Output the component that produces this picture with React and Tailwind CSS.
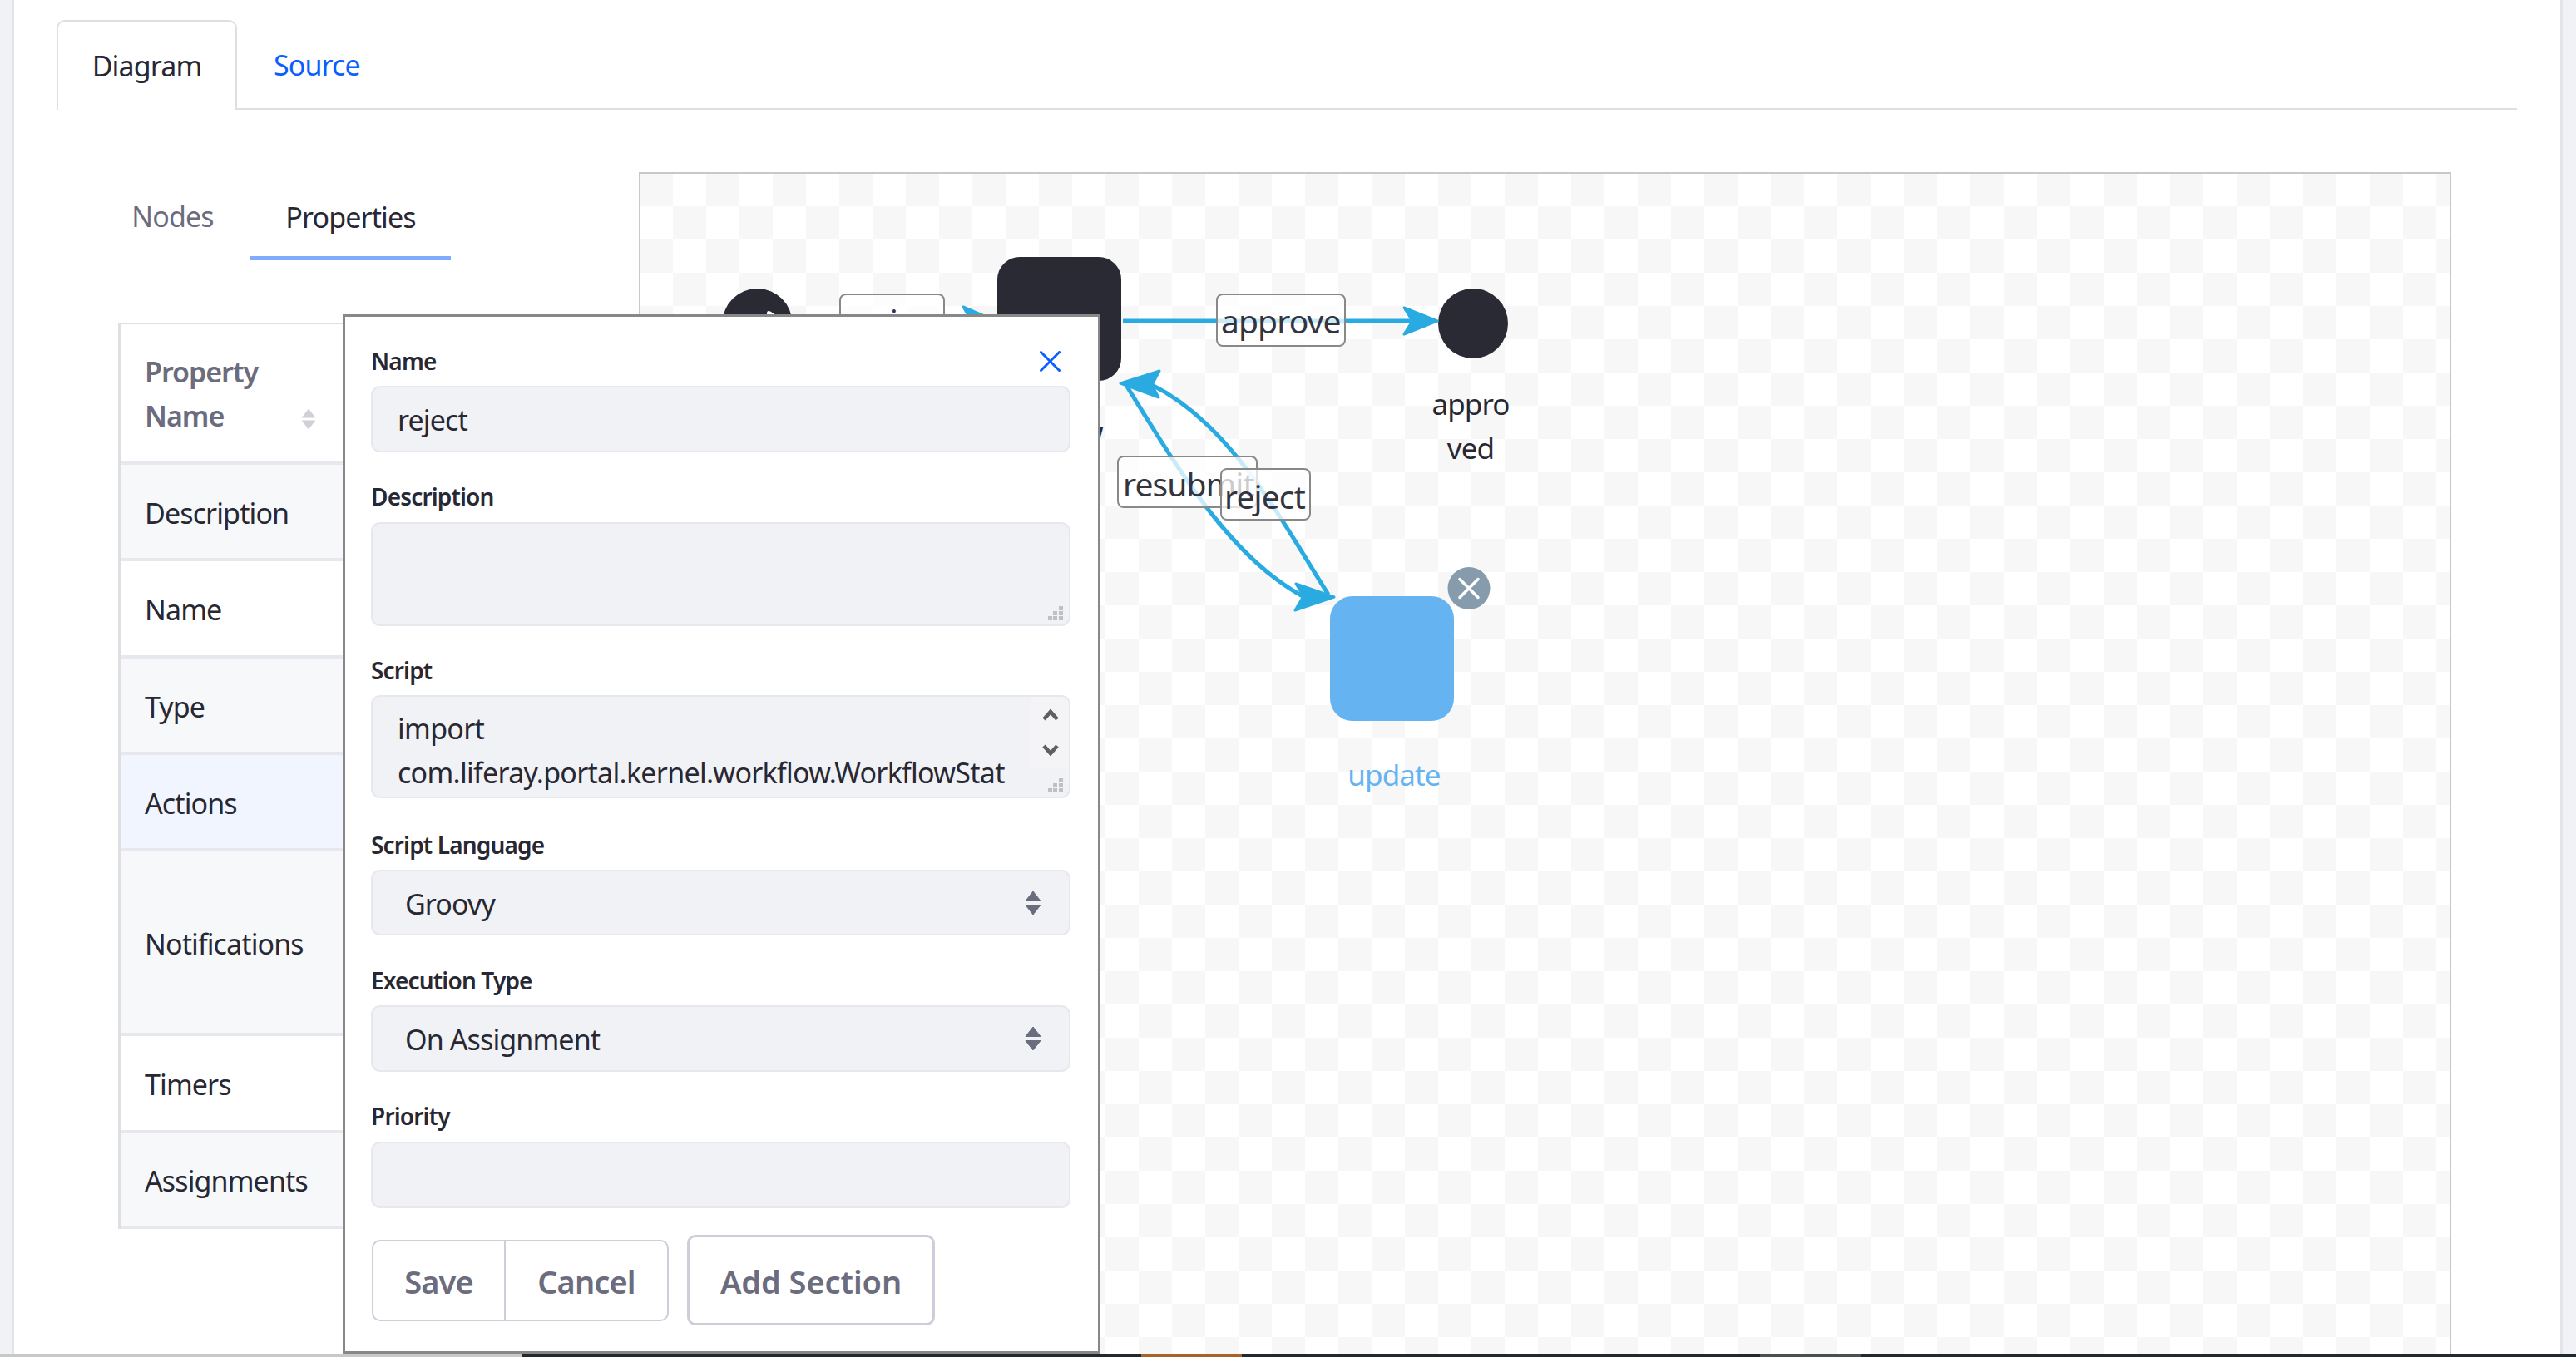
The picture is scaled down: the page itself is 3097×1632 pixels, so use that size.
import React from "react";

const X0 = 770;
const Y0 = 209;

function Grip() {
  return (
    <svg width="19" height="19" viewBox="0 0 19 19" className="absolute right-[7px] bottom-[5px]">
      <g fill="#bfc0c4">
        <rect x="14" y="2" width="5" height="5" />
        <rect x="7" y="8" width="5" height="5" />
        <rect x="14" y="8" width="5" height="5" />
        <rect x="1" y="14" width="5" height="5" />
        <rect x="7" y="14" width="5" height="5" />
        <rect x="14" y="14" width="5" height="5" />
      </g>
    </svg>
  );
}

function SelectArrows() {
  return (
    <svg width="20" height="30" viewBox="0 0 20 30">
      <path d="M10 1 L19 12.5 L1 12.5 Z" fill="#6b6c7e" stroke="#6b6c7e" strokeWidth="1" strokeLinejoin="round" />
      <path d="M1 17.5 L19 17.5 L10 29 Z" fill="#6b6c7e" stroke="#6b6c7e" strokeWidth="1" strokeLinejoin="round" />
    </svg>
  );
}

function SortArrows() {
  return (
    <svg width="18" height="26" viewBox="0 0 18 26">
      <path d="M9 0.5 L17.5 11.5 L0.5 11.5 Z" fill="#d0d1d6" />
      <path d="M0.5 14.5 L17.5 14.5 L9 25.5 Z" fill="#d0d1d6" />
    </svg>
  );
}

function Label({ children }) {
  return (
    <div className="mb-[11px] h-[40px] pt-[1px] text-[28px] leading-[40px] font-semibold tracking-[-0.03em] text-[#272833]">
      {children}
    </div>
  );
}

const boxClass =
  "relative flex items-center rounded-[11px] border-2 border-[#e7e7ed] bg-[#f1f2f5] text-[34px] text-[#272833]";

function Row({ label, className }) {
  return (
    <div className={`flex items-center pl-[29px] pt-[4px] border-b-4 border-[#e7e7ed] ${className}`}>{label}</div>
  );
}

function EdgeLabel({ text, className }) {
  return (
    <div
      className={`absolute flex items-center overflow-hidden rounded-[8px] border-2 border-[#888888] bg-white/75 text-[39px] whitespace-nowrap text-[#333440] ${className}`}
    >
      {text}
    </div>
  );
}

function Head({ d }) {
  return <path d={d} fill="#29abe2" stroke="#29abe2" strokeWidth="3" strokeLinejoin="round" />;
}

function Diagram() {
  return (
    <svg
      width="2177"
      height="1419"
      viewBox={`${X0} ${Y0} 2177 1419`}
      className="absolute left-0 top-0"
    >
      <circle cx="910.5" cy="389" r="42" fill="#2a2a35" />
      <path d="M922 389 L922 377 Q922 372 927 375 L940 384 Z" fill="#ffffff" />
      <rect x="1199" y="309" width="149" height="149" rx="27" fill="#2a2a35" />
      <circle cx="1771" cy="389" r="42" fill="#2a2a35" />
      <rect x="1599" y="717" width="149" height="150" rx="27" fill="#65b3f0" />
      <circle cx="1766" cy="707.5" r="25.5" fill="#869cad" />
      <path d="M1755 696.5 L1777 718.5 M1777 696.5 L1755 718.5" stroke="#ffffff" strokeWidth="3.5" strokeLinecap="round" />

      <path d="M1350 386 L1700 386" stroke="#29abe2" strokeWidth="5" fill="none" />
      <Head d="M1728 386 L1688 370 L1698 386 L1688 402 Z" />
      <Head d="M1197 386 L1158 369 L1168 386 L1158 403 Z" />

      <path d="M1355 465 C1420 570 1480 670 1566 717" stroke="#29abe2" strokeWidth="5" fill="none" />
      <path d="M1597 715 C1540 625 1480 510 1385 463" stroke="#29abe2" strokeWidth="5" fill="none" />
      <Head d="M1347 461 L1394 446 L1385 463 L1393 478 Z" />
      <Head d="M1604 718 L1558 702 L1567 717 L1557 734 Z" />
    </svg>
  );
}

export default function App() {
  return (
    <div className="relative flex h-[1632px] w-[3097px] flex-col overflow-hidden bg-[#f1f2f5] font-['Noto_Sans',sans-serif] text-[34px] leading-[53px] tracking-[-0.026em] text-[#272833]">
      <div className="ml-[14px] mr-[16px] h-[1628px] border-x-[3px] border-[#e3e3e8] bg-white">
        {/* Top tabs */}
        <div className="ml-[51px] flex h-[132px] w-[2958px] items-end border-b-2 border-[#dfdfe3] pt-[24px]">
          <div className="-mb-[2px] flex h-[108px] w-[217px] items-center justify-center rounded-t-[10px] border-x-2 border-t-2 border-[#dfdfe3] bg-white">
            Diagram
          </div>
          <div className="flex h-[108px] items-center pl-[44px] pt-[4px] text-[#0b5fff]">Source</div>
        </div>

        {/* Body */}
        <div className="mt-[75px] flex h-[1421px]">
          <div className="w-[751px] pl-[101px]">
            <div className="flex h-[106px]">
              <div className="flex h-[106px] w-[183px] items-center justify-center pr-[4px] pt-[1px] text-[#6b6c7e]">Nodes</div>
              <div className="flex h-[106px] w-[241px] items-center justify-center border-b-[5px] border-[#80acff] pt-[7px]">
                Properties
              </div>
            </div>
            <div className="ml-[24px] mt-[75px] w-[300px] border-l-[3px] border-t-[2px] border-[#dfdfe3]">
              <div className="relative h-[169px] border-b-4 border-[#e7e7ed] bg-white pl-[29px] pt-[31px] font-semibold tracking-[-0.03em] text-[#6b6c7e]">
                Property
                <br />
                Name
                <div className="absolute left-[217px] top-[101px] flex">
                  <SortArrows />
                </div>
              </div>
              <Row label="Description" className="h-[116px] bg-[#f7f8f9]" />
              <Row label="Name" className="h-[117px] bg-white" />
              <Row label="Type" className="h-[116px] bg-[#f7f8f9]" />
              <Row label="Actions" className="h-[116px] bg-[#f0f5ff]" />
              <Row label="Notifications" className="h-[222px] bg-[#f7f8f9]" />
              <Row label="Timers" className="h-[117px] bg-white" />
              <Row label="Assignments" className="h-[115px] bg-[#f7f8f9]" />
            </div>
          </div>

          {/* Canvas */}
          <div className="relative h-[1421px] w-[2179px] overflow-hidden border-x-2 border-t-2 border-[#c8c8c8] bg-[conic-gradient(#ffffff_25%,#f7f7f7_0_50%,#ffffff_0_75%,#f7f7f7_0)] bg-[length:80px_80px] bg-[position:-1px_-1px]">
            <Diagram />
            <EdgeLabel text="review" className="left-[239px] top-[144px] h-[64px] w-[127px] justify-center" />
            <div className="absolute right-[1619px] top-[283px] text-[35px] whitespace-nowrap">review</div>
            <EdgeLabel text="approve" className="left-[692px] top-[144px] h-[64px] w-[156px] pl-[4px]" />
            <EdgeLabel text="resubmit" className="left-[573px] top-[339px] h-[63px] w-[169px] pl-[5px] pt-[4px]" />
            <EdgeLabel text="reject" className="left-[697px] top-[354px] h-[63px] w-[109px] pl-[3px] pt-[4px]" />
            <div className="absolute left-[903px] top-[250px] w-[190px] text-center text-[35px]">
              appro
              <br />
              ved
            </div>
            <div className="absolute left-[806px] top-[696px] w-[200px] text-center text-[35px] text-[#65b3f0]">update</div>
          </div>
        </div>
      </div>

      {/* Bottom strip */}
      <div className="flex h-[4px] bg-[#1f2a30]">
        <div className="w-[628px] bg-[#c8c8c8]" />
        <div className="ml-[744px] w-[121px] bg-[#a8632a]" />
        <div className="ml-[623px] w-[121px] bg-[#4a4f52]" />
      </div>

      {/* Popover */}
      <div className="absolute left-[412px] top-[378px] flex h-[1250px] w-[911px] flex-col border-[3px] border-[#888888] bg-white pl-[31px] pr-[33px] pt-[32px]">
        <svg width="25" height="25" viewBox="0 0 25 25" className="absolute left-[835px] top-[41px]">
          <path d="M1.5 1.5 L23.5 23.5 M23.5 1.5 L1.5 23.5" stroke="#0b5fff" strokeWidth="3" strokeLinecap="round" />
        </svg>

        <div className="mb-[32px]">
          <Label>Name</Label>
          <div className={`${boxClass} h-[80px] pl-[30px] pt-[2px]`}>reject</div>
        </div>
        <div className="mb-[32px]">
          <Label>Description</Label>
          <div className={`${boxClass} mt-[12px] h-[125px]`}>
            <Grip />
          </div>
        </div>
        <div className="mb-[35px]">
          <Label>Script</Label>
          <div className="relative h-[124px] overflow-hidden rounded-[11px] border-2 border-[#e7e7ed] bg-[#f1f2f5] pl-[30px] pt-[12px] text-[34px] leading-[53px] tracking-[-0.021em] whitespace-nowrap text-[#272833]">
            import
            <br />
            com.liferay.portal.kernel.workflow.WorkflowStat
            <div className="absolute right-0 top-0 flex h-[86px] w-[45px] flex-col items-center gap-[26px] bg-[#f4f4f6] pt-[14px]">
              <svg width="20" height="16" viewBox="0 0 20 16">
                <path d="M2 13 L10 4 L18 13" fill="none" stroke="#5f5f5f" strokeWidth="4.5" />
              </svg>
              <svg width="20" height="16" viewBox="0 0 20 16">
                <path d="M2 3 L10 12 L18 3" fill="none" stroke="#5f5f5f" strokeWidth="4.5" />
              </svg>
            </div>
            <Grip />
          </div>
        </div>
        <div className="mb-[33px]">
          <Label>Script Language</Label>
          <div className={`${boxClass} h-[79px] justify-between pl-[39px] pr-[33px]`}>
            <span className="pt-[3px]">Groovy</span>
            <SelectArrows />
          </div>
        </div>
        <div className="mb-[32px]">
          <Label>Execution Type</Label>
          <div className={`${boxClass} h-[80px] justify-between pl-[39px] pr-[33px]`}>
            <span className="pt-[3px]">On Assignment</span>
            <SelectArrows />
          </div>
        </div>
        <div className="mb-[32px]">
          <Label>Priority</Label>
          <div className={`${boxClass} mt-[12px] h-[80px]`} />
        </div>
        <div className="flex h-[109px] items-center text-[38px] font-semibold text-[#6b6c7e]">
          <div className="ml-[1px] flex h-[98px] w-[357px] overflow-hidden rounded-[10px] border-2 border-[#cdced9] pt-[3px]">
            <div className="-mt-[3px] flex w-[159px] items-center justify-center border-r-2 border-[#cdced9] pt-[3px]">Save</div>
            <div className="flex flex-1 items-center justify-center">Cancel</div>
          </div>
          <div className="ml-[22px] flex h-[109px] w-[298px] items-center justify-center rounded-[10px] border-[3px] border-[#cdced9] pt-[3px] tracking-[-0.002em]">
            Add Section
          </div>
        </div>
      </div>
    </div>
  );
}
